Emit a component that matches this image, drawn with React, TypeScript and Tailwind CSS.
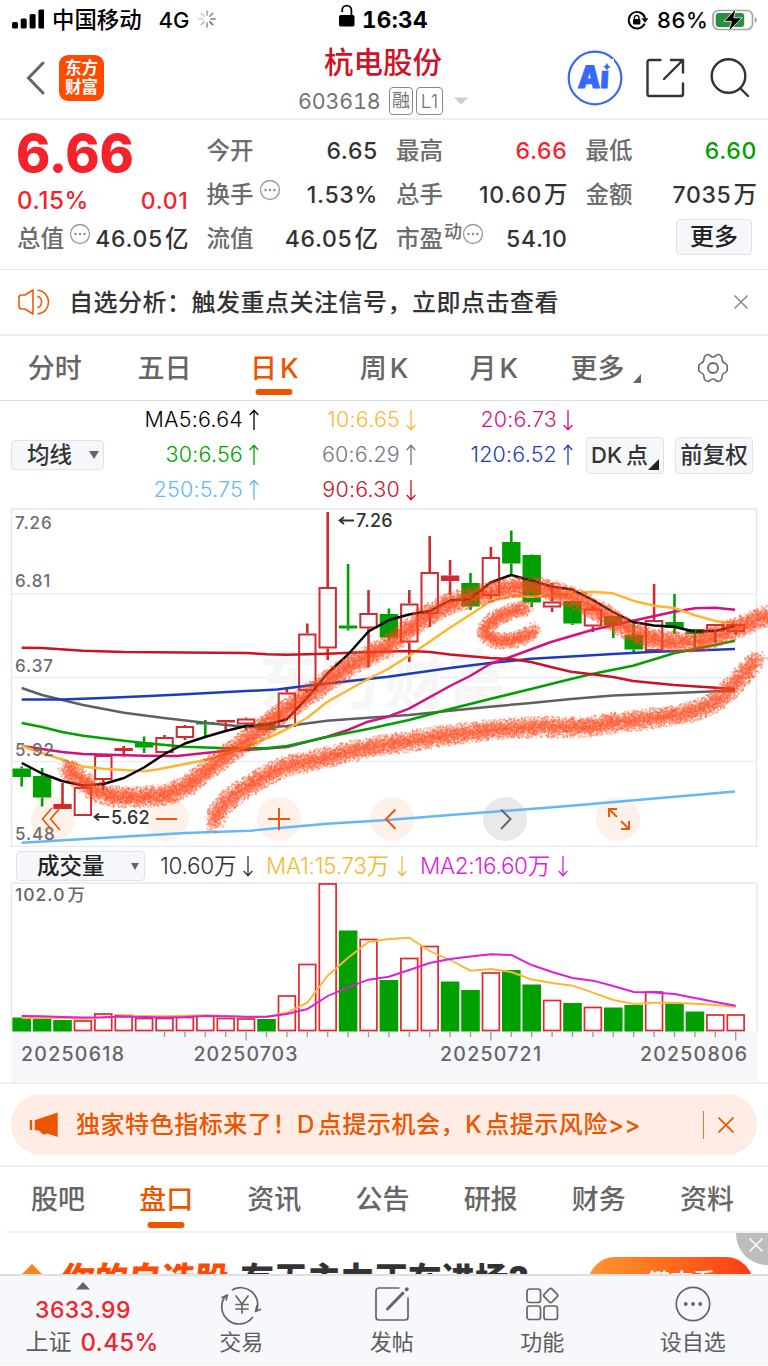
import type { ReactNode } from "react";

const CANDLE_RED = "#cf2b30";
const GREEN = "#00a000";

const CHART_LEFT = 21.7;
const STEP = 20.4;
const xAt = (i: number) => CHART_LEFT + i * STEP;

type Candle = { up: boolean; high: number; top: number; bottom: number; low: number };

const c = (up: boolean, high: number, top: number, bottom: number, low: number): Candle => ({
  up,
  high,
  top,
  bottom,
  low,
});

const candles: Candle[] = [
  c(false, 766.5, 768.5, 777, 786.5),
  c(false, 768, 776, 797.5, 806.5),
  c(true, 783, 804, 809, 809),
  c(true, 787, 787, 816, 816),
  c(true, 755, 755, 780, 790),
  c(true, 746, 748, 751, 756.5),
  c(false, 736.5, 742.5, 747.5, 753),
  c(true, 735, 737, 753, 753),
  c(true, 725, 726, 738, 740),
  c(false, 720, 722, 724.5, 736.5),
  c(true, 720, 720, 722.5, 730),
  c(true, 717.5, 718.5, 724.5, 730.5),
  c(false, 722, 722.5, 730, 731),
  c(true, 687, 692.5, 727, 728.5),
  c(true, 623.5, 633.5, 691, 693),
  c(true, 512, 587, 648.5, 660),
  c(false, 564, 625.5, 628.5, 630.5),
  c(true, 590, 613, 628.5, 667),
  c(false, 608.5, 614, 637.5, 640),
  c(true, 590, 603.5, 642.5, 662),
  c(true, 536, 572, 614, 627),
  c(true, 560, 575.5, 581, 595),
  c(false, 573, 583, 606.5, 610),
  c(true, 547, 557, 596, 599),
  c(false, 530.5, 542, 563.5, 575),
  c(false, 554.5, 555, 602.5, 607),
  c(true, 583, 601.5, 607.5, 612),
  c(false, 601, 601, 623.5, 625),
  c(true, 606, 608.5, 626.5, 632),
  c(false, 616, 616, 625.5, 638),
  c(false, 621, 635, 649.5, 652),
  c(true, 584, 620, 651, 651),
  c(false, 594, 622, 628, 634),
  c(false, 629, 629, 634, 649),
  c(true, 624, 624, 631.5, 643),
  c(true, 624, 624, 632, 635),
];

const averages = [
  {
    color: "#62b8f8",
    points: "21.7,842.7 185,833 250,830.7 327,823.7 388,820 450,815 511,810.5 571,805.7 735,791.5",
  },
  {
    color: "#606060",
    points:
      "21.7,688 42,695 83,705 124,712.7 164,718 205,722.7 246,727 266,727.5 287,726 327,720.7 368,717.7 409,715 450,710.7 490,706.7 531,703 571,699 613,695.5 674,693 735,690.5",
  },
  {
    color: "#1f3bbd",
    points:
      "21.7,699.5 62,699.5 103,698 144,696.3 185,694.3 227,692 277,689.5 307,685.7 350,681 388,676.7 450,668 490,663 531,658.8 571,656.5 613,654 655,651.7 695,650.5 735,649",
  },
  {
    color: "#d3127f",
    points:
      "21.7,746 62,752 83,754 144,755.7 177,756 205,753 227,750.7 250,749.7 287,747 327,736.7 348,730 368,721.7 388,716.7 409,708.7 450,686 470,676 490,664 511,656.7 551,642 592,630 633,620.7 674,611.7 695,608.3 715,607.7 735,609.7",
  },
  {
    color: "#00a000",
    points:
      "21.7,723 42,727 62,732 83,735.7 124,740.7 144,743 185,746.7 227,748.3 266,748.3 287,746 327,737 368,729 409,720 450,709 490,699 531,689 571,679 592,674 633,665.7 674,653.3 695,649 735,640.7",
  },
  {
    color: "#fbb733",
    points:
      "21.7,746 42,753 83,766.5 103,768.7 144,771.3 157,769.5 185,764 210,759 246,747 270,737 287,729 307,718 327,702 368,679 388,669 409,655.7 450,627.7 490,601.7 511,596 531,596.7 571,594 592,591.7 613,593.3 633,600.7 654,605.7 674,608 695,615.3 715,621 735,623",
  },
  {
    color: "#c81425",
    points:
      "21.7,647.7 42,648 83,650.7 124,652 246,653 267,654.3 287,654.7 327,653.7 368,652 409,651 430,652 450,654.5 490,658 511,659 531,662 551,667 571,671.7 592,674.3 613,677 633,681 674,685 735,689",
  },
  {
    color: "#000000",
    points:
      "21.7,763 42,773.5 62,781 83,785.5 103.5,784 124,778 144,767.5 164.5,754 185,743.5 205,737 225.6,731 246,726 266,725 287,719 307,698 327,674 348,654.5 368.5,631.5 389,620 409,614.5 430,611 450,600.5 470,599 490.7,582.5 511,575 531,580.5 551,586.5 572,589.5 592.7,600 613,612 633,622 653.7,625.5 674,626.7 694.7,631.7 715,631 735,626",
  },
];

type Point = [number, number];

const strokeUpper: Point[] = [
  [67, 768], [77, 777], [97, 792], [117, 797], [143, 797], [167, 795], [187, 786], [207, 770],
  [233, 750], [250, 738], [270, 722], [290, 707], [313, 692], [333, 677], [360, 660], [387, 647],
  [403, 633], [423, 618], [450, 603], [477, 595], [510, 587], [531, 587], [551, 590], [578, 600],
  [605, 615], [625, 628], [645, 637], [671, 642], [698, 642], [725, 633], [748, 623], [772, 614],
];

const strokeLower: Point[] = [
  [214, 823], [218, 812], [226, 802], [240, 791], [260, 779], [283, 767], [323, 758], [367, 748],
  [410, 741], [450, 735], [490, 730], [517, 728], [541, 727], [585, 727], [631, 721], [665, 717],
  [695, 711], [715, 702], [731, 688], [745, 672], [757, 659],
];

const strokeC: Point[] = [
  [526, 608], [510, 612], [496, 618], [486, 627], [485, 635], [498, 641], [515, 640], [526, 636],
  [534, 630],
];

// crayon texture: specks scattered along a polyline, denser in the middle
function specks(points: Point[], radius: number, perPixel: number, seed: number) {
  let s = seed;
  const rand = () => {
    s = (s * 1664525 + 1013904223) % 4294967296;
    return s / 4294967296;
  };
  let d = "";
  for (let i = 0; i < points.length - 1; i++) {
    const [x1, y1] = points[i];
    const [x2, y2] = points[i + 1];
    const n = Math.round(Math.hypot(x2 - x1, y2 - y1) * perPixel);
    for (let k = 0; k < n; k++) {
      const t = rand();
      const angle = rand() * Math.PI * 2;
      const r = radius * Math.pow(rand(), 0.8);
      const x = x1 + (x2 - x1) * t + Math.cos(angle) * r;
      const y = y1 + (y2 - y1) * t + Math.sin(angle) * r;
      d += `M${x.toFixed(1)} ${y.toFixed(1)}h.1`;
    }
  }
  return d;
}

function Crayon({ points, radius, density }: { points: Point[]; radius: number; density: number }) {
  return (
    <g fill="none" stroke="#ff4518" strokeLinecap="round" strokeLinejoin="round">
      <polyline points={points.map((p) => p.join(",")).join(" ")} strokeWidth={radius * 1.1} opacity="0.25" />
      {[11, 47, 83, 131].map((seed) => (
        <path key={seed} d={specks(points, radius, density, seed)} strokeWidth="1.7" opacity="0.4" />
      ))}
    </g>
  );
}

function Dots({ className = "" }: { className?: string }) {
  return (
    <svg viewBox="0 0 22 22" className={`h-[22px] w-[22px] shrink-0 ${className}`}>
      <circle cx="11" cy="11" r="9.5" fill="none" stroke="#999" strokeWidth="1.3" />
      <g fill="#888">
        <circle cx="6.5" cy="11" r="1.2" />
        <circle cx="11" cy="11" r="1.2" />
        <circle cx="15.5" cy="11" r="1.2" />
      </g>
    </svg>
  );
}

function StatusBar() {
  return (
    <div className="flex h-10 items-center text-black">
      <div className="flex w-[338px] items-center pl-3">
        <svg viewBox="0 0 32 20" className="mb-[3px] h-5 w-8">
          <rect x="0" y="13" width="6" height="6.5" rx="1.5" />
          <rect x="8.7" y="9.5" width="6" height="10" rx="1.5" />
          <rect x="17.6" y="5" width="6" height="14.5" rx="1.5" />
          <rect x="26.4" y="0.5" width="6" height="19" rx="1.5" />
        </svg>
        <span className="ml-[8px] text-[22.4px] leading-10 font-medium">中国移动</span>
        <span className="ml-[17px] text-[22px] leading-10 font-medium">4G</span>
        <svg viewBox="0 0 18 18" className="mb-[2px] ml-[9px] h-[18px] w-[18px]" strokeWidth="1.7" strokeLinecap="round">
          <path d="M9 1v4" stroke="#aaa" />
          <path d="M14.7 3.3l-2.8 2.8" stroke="#999" />
          <path d="M17 9h-4" stroke="#777" />
          <path d="M14.7 14.7l-2.8-2.8" stroke="#777" />
          <path d="M9 17v-4" stroke="#999" />
          <path d="M3.3 14.7l2.8-2.8" stroke="#bbb" />
          <path d="M1 9h4" stroke="#ccc" />
          <path d="M3.3 3.3l2.8 2.8" stroke="#ccc" />
        </svg>
      </div>
      <svg viewBox="0 0 18 24" className="mb-[8px] h-6 w-[18px]">
        <rect x="1" y="11" width="15.5" height="11.5" rx="1.8" />
        <path d="M4.2 8V6.2a4.6 4.6 0 0 1 9.2 0V12" fill="none" stroke="#000" strokeWidth="1.8" />
      </svg>
      <span className="ml-[6px] w-[70px] text-[22.5px] leading-10 font-bold tracking-[0.3px] tabular-nums">16:34</span>
      <svg viewBox="0 0 22 20" className="ml-[195px] h-5 w-[22px]">
        <path d="M17.6 13.6A8.3 8.3 0 1 1 18 8" fill="none" stroke="#000" strokeWidth="1.9" />
        <path d="M14.4 8.2h7l-3.4 4.6z" />
        <rect x="6" y="9" width="7.4" height="5.6" rx="1" />
        <path d="M7.4 9V7.6a2.3 2.3 0 0 1 4.6 0V9" fill="none" stroke="#000" strokeWidth="1.3" />
      </svg>
      <span className="ml-[8px] w-[51px] text-[22px] leading-10 font-medium tracking-[0.6px]">86%</span>
      <svg viewBox="0 0 48 24" className="mb-[1px] ml-[4px] h-6 w-12">
        <rect x="1" y="2.5" width="39.5" height="19" rx="5.5" fill="none" stroke="#a5a5a5" strokeWidth="1.7" />
        <rect x="3.7" y="5" width="28.5" height="14" rx="3" fill="#2b8f43" />
        <path d="M42.8 9v6c2.6-.8 2.6-5.2 0-6z" fill="#999" />
        <path d="M24 0.5 L12 13.3 H19.5 L16.5 23.5 L30 9.8 H21.8 Z" fill="#000" stroke="#fff" strokeWidth="0.8" />
      </svg>
    </div>
  );
}

function Header() {
  return (
    <header className="flex h-20 border-b-2 border-[#efefef]">
      <div className="flex w-[287px] items-center pb-0.5 pl-[26px]">
        <svg viewBox="0 0 20 34" className="h-[34px] w-5">
          <path d="M17 2 L2.5 17 L17 32" fill="none" stroke="#666" strokeWidth="3" strokeLinecap="round" />
        </svg>
        <div className="ml-[13px] flex h-[46px] w-[45px] flex-col items-center justify-center rounded-[9px] bg-[#ff4a00] text-[16.5px] leading-[19px] font-bold text-white">
          <span>东方</span>
          <span>财富</span>
        </div>
      </div>
      <div className="flex w-[192px] flex-col items-center">
        <span className="mt-[5px] text-[29.5px] leading-[34px] font-medium text-[#cf1226]">杭电股份</span>
        <div className="mt-[8px] flex items-center gap-[3px] text-[#737373]">
          <span className="w-[88px] text-[21.5px] leading-7 tracking-[-0.2px] tabular-nums">603618</span>
          <span className="flex h-7 w-6 items-center justify-center rounded-[4px] border border-[#888] text-[18px] leading-none">融</span>
          <span className="flex h-7 w-[27px] items-center justify-center rounded-[4px] border border-[#888] text-[19px] leading-none font-light">L1</span>
          <svg viewBox="0 0 14 8" className="ml-[8px] h-2 w-3.5">
            <path d="M0 0.5h14L7 7.5z" fill="#ccc" />
          </svg>
        </div>
      </div>
      <div className="flex flex-1 items-center pb-0.5 pl-[88px]">
        <svg viewBox="0 0 56 56" className="h-14 w-14">
          <circle cx="28" cy="28" r="26.3" fill="none" stroke="#3768fb" strokeWidth="2.2" />
          <text
            x="12.5"
            y="38"
            fontSize="31"
            fontWeight="900"
            textLength="31"
            lengthAdjust="spacingAndGlyphs"
            transform="skewX(-3)"
            fill="#3768fb"
            stroke="#3768fb"
            strokeWidth="1"
          >
            Ai
          </text>
          <rect x="33" y="9" width="14" height="11.5" fill="#fff" />
          <path d="M40 12.5c.9 3 1.5 3.400 4.200 4.300-2.700.9-3.300 1.400-4.200 4.300-.9-2.900-1.500-3.400-4.200-4.300 2.700-.9 3.300-1.300 4.200-4.300z" fill="#3768fb" />
        </svg>
        <svg viewBox="0 0 40 40" className="ml-[22px] h-10 w-10" fill="none" stroke="#333" strokeWidth="2.4" strokeLinecap="round" strokeLinejoin="round">
          <path d="M15.500 2H4.500a2 2 0 0 0-2 2v32a2 2 0 0 0 2 2H36a2 2 0 0 0 2-2V25.500" />
          <path d="M26 2h12v12.500M37.500 2.500L19 21" />
        </svg>
        <svg viewBox="0 0 40 42" className="ml-[25px] h-[42px] w-10" fill="none" stroke="#333" strokeWidth="2.4" strokeLinecap="round">
          <circle cx="18.500" cy="19" r="16.800" />
          <path d="M30.500 31.500L38 39" />
        </svg>
      </div>
    </header>
  );
}

type QuoteProps = {
  label: string;
  value: string;
  unit?: string;
  color?: string;
  extra?: ReactNode;
};

function Quote({ label, value, unit, color = "text-[#333]", extra }: QuoteProps) {
  return (
    <div className="flex h-11 items-center">
      <span className="-ml-px shrink-0 text-[23.5px] leading-none font-medium text-[#6c6c6c]">{label}</span>
      {extra}
      <span className={`ml-auto flex items-center text-[23px] leading-none font-medium tracking-[0.7px] whitespace-nowrap ${color}`}>
        {value}
        {unit && <span className="ml-[2px] text-[23.5px] tracking-normal">{unit}</span>}
      </span>
    </div>
  );
}

function QuotePanel() {
  return (
    <section className="grid h-[150px] grid-cols-4 gap-x-[19px] border-b border-[#e6e6e6] pt-[9px] pr-[11px] pl-[18px]">
      <div className="text-[#f5222b]">
        <div className="-ml-[2px] h-[50px] text-[52px] leading-[50px] font-extrabold tracking-[-0.200px]">6.66</div>
        <div className="flex h-[38px] justify-between pt-[3px] text-[23px] leading-[38px] font-medium tracking-[0.700px]">
          <span className="-ml-px text-[24px]">0.15%</span>
          <span>0.01</span>
        </div>
        <Quote label="总值" value="46.05" unit="亿" extra={<Dots className="mb-2.5 ml-[5px]" />} />
      </div>
      <div>
        <Quote label="今开" value="6.65" />
        <Quote label="换手" value="1.53%" extra={<Dots className="mb-2.5 ml-[5px]" />} />
        <Quote label="流值" value="46.05" unit="亿" />
      </div>
      <div>
        <Quote label="最高" value="6.66" color="text-[#f5222b]" />
        <Quote label="总手" value="10.60" unit="万" />
        <Quote
          label="市盈"
          value="54.10"
          extra={
            <>
              <span className="mb-3.5 ml-px text-[18px] leading-none font-medium text-[#6c6c6c]">动</span>
              <Dots className="mb-2.5" />
            </>
          }
        />
      </div>
      <div>
        <Quote label="最低" value="6.60" color="text-[#00a000]" />
        <Quote label="金额" value="7035" unit="万" />
        <div className="mt-[2px] mr-[5px] ml-auto flex h-9 w-[76px] items-center justify-center rounded-[4px] border border-[#e0e2e8] bg-[#f6f7fa] text-[24px] leading-none font-medium text-[#222]">
          更多
        </div>
      </div>
    </section>
  );
}

function Notice() {
  return (
    <section className="flex h-[66px] items-center border-b-2 border-[#ececec] pl-[18px] text-[#333]">
      <svg viewBox="0 0 32 28" className="h-7 w-8" fill="none" stroke="#eb5a0a" strokeWidth="1.600" strokeLinejoin="round" strokeLinecap="round">
        <path d="M15 2L7 7H3.500Q1 7 1 9.500v9Q1 21 3.500 21H7l8 5z" />
        <path d="M20 8.500a6 6 0 0 1 0 11" />
        <path d="M20 2.300c14 1.500 14 22 0 23.400" />
      </svg>
      <span className="ml-[19px] pt-px text-[24px] leading-none font-medium tracking-[0.500px]">
        自选分析：触发重点关注信号，立即点击查看
      </span>
      <svg viewBox="0 0 14 14" className="mr-[20px] ml-auto h-3.5 w-3.5" stroke="#888" strokeWidth="1.500">
        <path d="M.5 .5l13 13M13.500 .5l-13 13" />
      </svg>
    </section>
  );
}

const periods = ["分时", "五日", "日K", "周K", "月K"];

function PeriodTabs() {
  return (
    <nav className="grid h-[65px] grid-cols-7 border-b-[1.500px] border-[#dcdde4] text-[27px] leading-none text-[#666]">
      {periods.map((p) => {
        const active = p === "日K";
        return (
          <div
            key={p}
            className={`relative flex items-center justify-center font-medium ${active ? "text-[#eb5500]" : ""} ${
              p.endsWith("K") ? "pl-[3px] tracking-[3px]" : ""
            }`}
          >
            {p}
            {active && <span className="absolute bottom-[5px] left-1/2 h-1.5 w-[37px] -translate-x-1/2 rounded-full bg-[#eb5500]" />}
          </div>
        );
      })}
      <div className="flex items-center pl-[22px] font-medium">
        更多
        <svg viewBox="0 0 8 9" className="mt-[20px] ml-[8px] h-[9px] w-2">
          <path d="M8 0v9H0z" fill="#666" />
        </svg>
      </div>
      <div className="flex items-center justify-center">
        <svg viewBox="0 0 32 32" className="h-8 w-8" fill="none" stroke="#666" strokeWidth="1.500" strokeLinejoin="round">
          <path d="M8.500 3.500Q11 1.600 13 3.600Q16 6.400 19 3.600Q21 1.600 23.500 3.500Q25.200 4.600 25 7Q25 10.500 28.200 11.400Q30.400 12.200 30.400 16Q30.400 19.800 28.200 20.600Q25 21.500 25 25Q25.200 27.400 23.500 28.500Q21 30.400 19 28.400Q16 25.600 13 28.400Q11 30.400 8.500 28.500Q6.800 27.400 7 25Q7 21.500 3.800 20.600Q1.600 19.800 1.600 16Q1.600 12.200 3.800 11.400Q7 10.500 7 7Q6.800 4.600 8.500 3.500Z" />
          <circle cx="16" cy="16" r="5" strokeWidth="1.800" />
        </svg>
      </div>
    </nav>
  );
}

function Arrow({ down }: { down?: boolean }) {
  return (
    <svg viewBox="0 0 10 22" className="h-[22px] w-2.5" fill="none" stroke="currentColor" strokeWidth="1.300">
      {down ? <path d="M5 1v19.500M.7 16L5 20.700 9.300 16" /> : <path d="M5 21V1.500M.7 6L5 1.300 9.300 6" />}
    </svg>
  );
}

const maLabels = [
  { text: "MA5:6.64", color: "text-black" },
  { text: "10:6.65", color: "text-[#fbb733]", down: true },
  { text: "20:6.73", color: "text-[#d3127f]", down: true },
  { text: "30:6.56", color: "text-[#00a000]" },
  { text: "60:6.29", color: "text-[#777]" },
  { text: "120:6.52", color: "text-[#1f3bbd]" },
  { text: "250:5.75", color: "text-[#62b8f8]" },
  { text: "90:6.30", color: "text-[#c81425]", down: true },
];

function MaPanel() {
  return (
    <section className="flex h-[107px] items-center pt-px pl-[11px] text-[#333]">
      <div className="flex h-[30px] w-[93px] items-center rounded-[4px] border border-[#e0e2e8] bg-[#f6f7fa] pl-[15px] text-[22.500px] leading-none font-medium">
        均线
        <svg viewBox="0 0 10 8" className="mr-[4px] ml-auto h-2 w-2.5">
          <path d="M0 0h10L5 8z" fill="#666" />
        </svg>
      </div>
      <div className="grid grid-cols-[155px_157px_157px] grid-rows-[35px_35px_35px]">
        {maLabels.map((m) => (
          <div key={m.text} className={`flex items-center justify-end gap-[6px] text-[21.500px] leading-none font-[350] tracking-[0.200px] ${m.color}`}>
            {m.text}
            <Arrow down={m.down} />
          </div>
        ))}
      </div>
      <div className="relative ml-[13px] flex h-[37px] w-[78px] items-center rounded-[4px] border border-[#e0e2e8] bg-[#f6f7fa] pl-[4px] text-[22px] leading-none font-medium">
        DK<span className="ml-[4px]">点</span>
        <svg viewBox="0 0 11 11" className="absolute right-[4px] bottom-[3px] h-[11px] w-[11px]">
          <path d="M11 0v11H0z" fill="#222" />
        </svg>
      </div>
      <div className="ml-[11px] flex h-[37px] w-[78px] items-center justify-center rounded-[4px] border border-[#e0e2e8] bg-[#f6f7fa] text-[22.500px] leading-none font-medium">
        前复权
      </div>
    </section>
  );
}

function CandleShape({ candle, x }: { candle: Candle; x: number }) {
  const { up, high, top, bottom, low } = candle;
  const color = up ? CANDLE_RED : GREEN;
  const thin = bottom - top < 5.6;
  return (
    <g stroke={color} fill="none">
      <path d={`M${x} ${high}V${top}M${x} ${bottom}V${low}`} strokeWidth="2.600" />
      {up && !thin ? (
        <rect x={x - 8.2} y={top + 1} width="16.400" height={bottom - top - 2} strokeWidth="2" />
      ) : (
        <rect x={x - 9.2} y={top} width="18.400" height={bottom - top} fill={color} stroke="none" />
      )}
    </g>
  );
}

const priceAxis: [string, number][] = [
  ["7.26", 528.5],
  ["6.81", 587],
  ["6.37", 671.5],
  ["5.92", 755.5],
  ["5.48", 840],
];

function CandleChart() {
  return (
    <svg viewBox="0 508 768 339" className="block h-[339px] w-[768px]">
      <rect x="11.500" y="509" width="745" height="337.500" fill="none" stroke="#e6e7ec" strokeWidth="1.500" />
      <path d="M12 594H757M12 677.500H757M12 761.500H757" stroke="#ecedf2" strokeWidth="1.500" />
      <text x="258" y="703" fontSize="63" fontWeight="700" fill="#f6f6f6">
        东方财富
      </text>
      {[53, 167, 279, 392, 505, 618].map((x) => (
        <circle key={x} cx={x} cy="819" r="22" fill={x === 505 ? "#e9e9e9" : "#fdf1ea"} />
      ))}
      {candles.map((candle, i) => (
        <CandleShape key={i} candle={candle} x={xAt(i)} />
      ))}
      {averages.map((line) => (
        <polyline key={line.color} points={line.points} fill="none" stroke={line.color} strokeWidth="2.500" strokeLinejoin="round" />
      ))}
      <g fontSize="17" fontWeight="500" fill="#666" letterSpacing="0.9" opacity="0.95">
        {priceAxis.map(([t, y]) => (
          <text key={t} x="15" y={y}>
            {t}
          </text>
        ))}
      </g>
      <g fill="none" stroke="#eb5a0a" strokeWidth="2">
        <path d="M52 808L42.500 819L52 830M60 808L50.500 819L60 830" strokeWidth="1.700" />
        <path d="M156 819h21" />
        <path d="M268 819h22M279 808v22" />
        <path d="M395.500 809.500L386 819L395.500 829" />
        <path d="M501 809.500L510.500 819L501 829" stroke="#666" />
        <path d="M609 817v-8h8M609 809l8 8M621 829h8v-8M629 829l-8-8" />
      </g>
      <g fill="none" stroke="#333" strokeWidth="1.800">
        <path d="M339 520.500h15M344 517l-4.500 3.500 4.500 3.500M94 817h15M99 813.500l-4.500 3.500 4.500 3.500" />
      </g>
      <g fontSize="18" fontWeight="500" fill="#333" letterSpacing="0.2">
        <text x="356" y="527">7.26</text>
        <text x="111" y="824">5.62</text>
      </g>
      <Crayon points={strokeUpper} radius={11} density={6} />
      <Crayon points={strokeLower} radius={11} density={5} />
      <Crayon points={strokeC} radius={8.5} density={5} />
    </svg>
  );
}

const volumes: [boolean, number][] = [
  [false, 1017.5], [false, 1016.5], [false, 1020], [true, 1020], [true, 1013], [true, 1014.5],
  [true, 1017.5], [true, 1017.5], [true, 1016.5], [true, 1015], [true, 1017.5], [true, 1018],
  [false, 1019], [true, 995], [true, 963.5], [true, 883], [false, 930.5], [true, 938.5],
  [false, 980], [true, 957.5], [true, 945.5], [false, 981.5], [false, 990], [true, 972],
  [false, 970], [false, 984.5], [true, 999.5], [false, 1003], [true, 1006.5], [false, 1007.5],
  [false, 1005], [true, 991], [false, 1003.5], [false, 1011.5], [true, 1014], [true, 1014],
];

const volumeMa1 = [
  1018, 1018, 1018, 1018.5, 1017.5, 1016.5, 1016, 1016.3, 1015.8, 1015.3, 1016, 1017, 1017, 1012.7,
  1002.7, 975.7, 957.7, 942, 939, 937.7, 951, 960, 970.7, 969, 972, 979.5, 983, 985.7, 992.7, 1000,
  1004, 1002.7, 1002.7, 1003.7, 1005, 1006.7,
];

const volumeMa2 = [
  1016, 1016.3, 1017, 1017.5, 1017.3, 1016.6, 1017, 1017.5, 1017, 1016, 1016.3, 1016.7, 1016.7, 1014,
  1009, 996, 987.3, 979.7, 976.7, 970, 963, 959, 956.5, 954.3, 955, 965, 972, 978, 980.7, 986, 992,
  992.5, 994, 998, 1002, 1005.7,
];

const toPoints = (ys: number[]) => ys.map((y, i) => `${xAt(i)},${y}`).join(" ");

function VolumeChart() {
  return (
    <svg viewBox="0 882 768 200" className="block h-[200px] w-[768px]">
      <rect x="11.500" y="1031" width="746" height="51" fill="#f6f7fa" />
      <path d="M11.500 1031V883H757V1031" fill="none" stroke="#e6e7ec" strokeWidth="1.500" />
      <text x="15" y="900.500" fontSize="17.500" fontWeight="500" fill="#666" letterSpacing="1.000">
        102.0<tspan dx="2">万</tspan>
      </text>
      {volumes.map(([up, y], i) =>
        up ? (
          <rect key={i} x={xAt(i) - 8.4} y={y + 1} width="16.800" height={1029.5 - y} fill="#fff" stroke="#e6262b" strokeWidth="1.700" />
        ) : (
          <rect key={i} x={xAt(i) - 9.3} y={y} width="18.600" height={1031.5 - y} fill={GREEN} />
        ),
      )}
      <polyline points={toPoints(volumeMa1)} fill="none" stroke="#fbb733" strokeWidth="1.900" />
      <polyline points={toPoints(volumeMa2)} fill="none" stroke="#dc1fdc" strokeWidth="1.900" />
      {volumes.map((_, i) =>
        i > 6 ? (
          <path key={i} d={`M${xAt(i)} 1032V${i % 12 === 11 ? 1040.5 : 1037}`} stroke="#999" strokeWidth="1.300" />
        ) : null,
      )}
      <g fontSize="19.500" fontWeight="500" fill="#666">
        <text x="21" y="1060.500" textLength="103">20250618</text>
        <text x="193.500" y="1060.500" textLength="104">20250703</text>
        <text x="440" y="1060.500" textLength="101">20250721</text>
        <text x="640" y="1060.500" textLength="107">20250806</text>
      </g>
    </svg>
  );
}

function VolumeHeader() {
  return (
    <div className="flex h-[35px] items-center pt-[3px] pl-4 text-[22.500px] leading-none font-[350]">
      <div className="flex h-[30px] w-[129px] items-center rounded-[4px] border border-[#e0e2e8] bg-[#f6f7fa] pl-[20px] font-medium text-[#222]">
        成交量
        <svg viewBox="0 0 8 7" className="mr-[5px] ml-auto h-[7px] w-2">
          <path d="M0 0h8L4 7z" fill="#666" />
        </svg>
      </div>
      <div className="ml-[15px] flex w-[106px] items-center justify-between pr-[13px] text-[#333]">
        <span className="tracking-[-0.300px]">10.60万</span>
        <Arrow down />
      </div>
      <div className="flex w-[154px] items-center justify-between pr-[13px] text-[#fbb733]">
        <span className="tracking-[-0.300px]">MA1:15.73万</span>
        <Arrow down />
      </div>
      <div className="flex w-[148px] items-center justify-between text-[#dc1fdc]">
        <span className="tracking-[-0.300px]">MA2:16.60万</span>
        <Arrow down />
      </div>
    </div>
  );
}

function Banner() {
  return (
    <section className="h-[85px] border-y-2 border-[#f0f0f2] px-[11px] pt-[10px]">
      <div className="flex h-[61px] items-center rounded-full bg-[#feece5] pl-[18px] text-[#eb5500]">
        <svg viewBox="0 0 30 26" className="h-[26px] w-[30px]" fill="#eb5500">
          <rect x="0.800" y="8" width="2.400" height="10" rx="0.500" />
          <path d="M5.700 8.300L28.700 0.500V25L23 23l-5-1.400c-1.500 1.500-4 .8-5.500-.4L10.500 18.800l-4.800-.8z" />
        </svg>
        <span className="ml-[17px] pt-px text-[24px] leading-none font-medium tracking-[0.550px] whitespace-nowrap">
          独家特色指标来了！D<span className="ml-[3px]">点提示机会，</span>K<span className="ml-[3px]">点提示风险</span>&gt;&gt;
        </span>
        <span className="ml-auto h-7 w-[1.500px] bg-[#eb5500] opacity-80" />
        <svg viewBox="0 0 16 16" className="mr-[23px] ml-[14px] h-4 w-4" stroke="#eb5500" strokeWidth="1.600">
          <path d="M.5 .5l15 15M15.500 .5l-15 15" />
        </svg>
      </div>
    </section>
  );
}

const sections = ["股吧", "盘口", "资讯", "公告", "研报", "财务", "资料"];

function SectionTabs() {
  return (
    <nav className="grid h-[64px] grid-cols-7 pt-px pr-[7px] pl-[4px] text-[27px] leading-none font-medium text-[#666]">
      {sections.map((s) => (
        <div key={s} className={`relative flex items-center justify-center ${s === "盘口" ? "text-[#eb5500]" : ""}`}>
          {s}
          {s === "盘口" && <span className="absolute bottom-[3px] left-1/2 h-1.5 w-[37px] -translate-x-1/2 rounded-full bg-[#eb5500]" />}
        </div>
      ))}
    </nav>
  );
}

function Promo() {
  return (
    <section className="relative ml-[6px] flex h-[43px] overflow-hidden border-t-2 border-[#f0f0f2] text-[33.500px] leading-[40px] font-black whitespace-nowrap">
      <svg viewBox="0 0 22 22" className="mt-[31px] ml-[15px] h-[22px] w-[22px] shrink-0">
        <path d="M11 0L22 11L11 22L0 11z" fill="#ff8420" />
      </svg>
      <span className="mt-[26px] ml-[19px] -skew-x-6 text-[#ff4a00]">你的自选股</span>
      <span className="mt-[26px] ml-[11px] text-[#333]">有无主力正在进场?</span>
      <div className="absolute top-[24px] left-[582px] h-[54px] w-[165px] rounded-full bg-linear-to-r from-[#ff9632] via-[#ff6a1c] to-[#ff3517] pt-[6px] text-center text-[22.500px] leading-[38px] font-bold text-white">
        一键查看
      </div>
      <svg viewBox="0 0 32 32" className="absolute top-0 right-0 h-8 w-8">
        <path d="M0 0h32v32C14 32 0 18 0 0z" fill="#bdbdbd" />
        <path d="M13.500 5.500l13 13M26.500 5.500l-13 13" stroke="#fff" strokeWidth="1.500" />
      </svg>
    </section>
  );
}

function NavItem({ label, children }: { label: string; children: ReactNode }) {
  return (
    <div className="flex flex-1 flex-col items-center pt-[8px]">
      <svg viewBox="0 0 40 40" className="h-10 w-10 overflow-visible" fill="none" stroke="#666" strokeWidth="1.700" strokeLinecap="round" strokeLinejoin="round">
        {children}
      </svg>
      <span className="mt-[6px] text-[22px] leading-[24px]">{label}</span>
    </div>
  );
}

function BottomNav() {
  return (
    <footer className="flex h-[91px] border-t-2 border-[#dfe0e5] bg-[#f7f8fb] text-[#5c5c5c]">
      <div className="flex w-[166px] flex-col items-center text-[23px]">
        <svg viewBox="0 0 14 8" className="mt-[6px] h-2 w-3.5">
          <path d="M7 0l7 7.500H0z" fill="#666" />
        </svg>
        <span className="mt-[4px] text-[23px] leading-[32px] font-medium tracking-[0.400px] text-[#f5222b]">3633.99</span>
        <span className="ml-[18px] flex items-center leading-[33px] whitespace-nowrap">
          上证
          <span className="ml-[9px] text-[24px] font-medium tracking-[0.300px] text-[#f5222b]">0.45%</span>
        </span>
      </div>
      <NavItem label="交易">
        <path d="M11.500 5.800A17 17 0 0 1 36 25.500M34.500 27.500l1.500-6M35.500 27l4-1.500" />
        <path d="M31.500 33.500A17 17 0 0 1 4.500 12M1 13.500l5.500-2.500M6.200 11l-1 5" />
        <path d="M15 12l6 8 6-8M21 20v9M15 20.500h12M15 25h12" />
      </NavItem>
      <NavItem label="发帖">
        <path d="M27 4H7a3 3 0 0 0-3 3v26a3 3 0 0 0 3 3h26a3 3 0 0 0 3-3V14" />
        <path d="M15.500 25L31 9" strokeWidth="3" />
        <path d="M34.500 5.500l.5-.5" strokeWidth="3.500" />
      </NavItem>
      <NavItem label="功能">
        <rect x="5" y="5" width="13.500" height="13.500" rx="2.500" />
        <rect x="5" y="22" width="13.500" height="13.500" rx="2.500" />
        <rect x="22" y="22" width="13.500" height="13.500" rx="2.500" />
        <rect x="23.200" y="6" width="11" height="11" rx="2" transform="rotate(45 28.700 11.500)" />
      </NavItem>
      <NavItem label="设自选">
        <circle cx="20" cy="20" r="16.700" />
        <g fill="#666" stroke="none">
          <circle cx="12.800" cy="20" r="1.900" />
          <circle cx="20" cy="20" r="1.900" />
          <circle cx="27.200" cy="20" r="1.900" />
        </g>
      </NavItem>
    </footer>
  );
}

export default function App() {
  return (
    <div className="h-[1366px] w-[768px] overflow-hidden bg-white font-['Inter','Noto_Sans_CJK_SC',sans-serif]">
      <StatusBar />
      <Header />
      <QuotePanel />
      <Notice />
      <PeriodTabs />
      <MaPanel />
      <CandleChart />
      <VolumeHeader />
      <VolumeChart />
      <Banner />
      <SectionTabs />
      <Promo />
      <BottomNav />
    </div>
  );
}
